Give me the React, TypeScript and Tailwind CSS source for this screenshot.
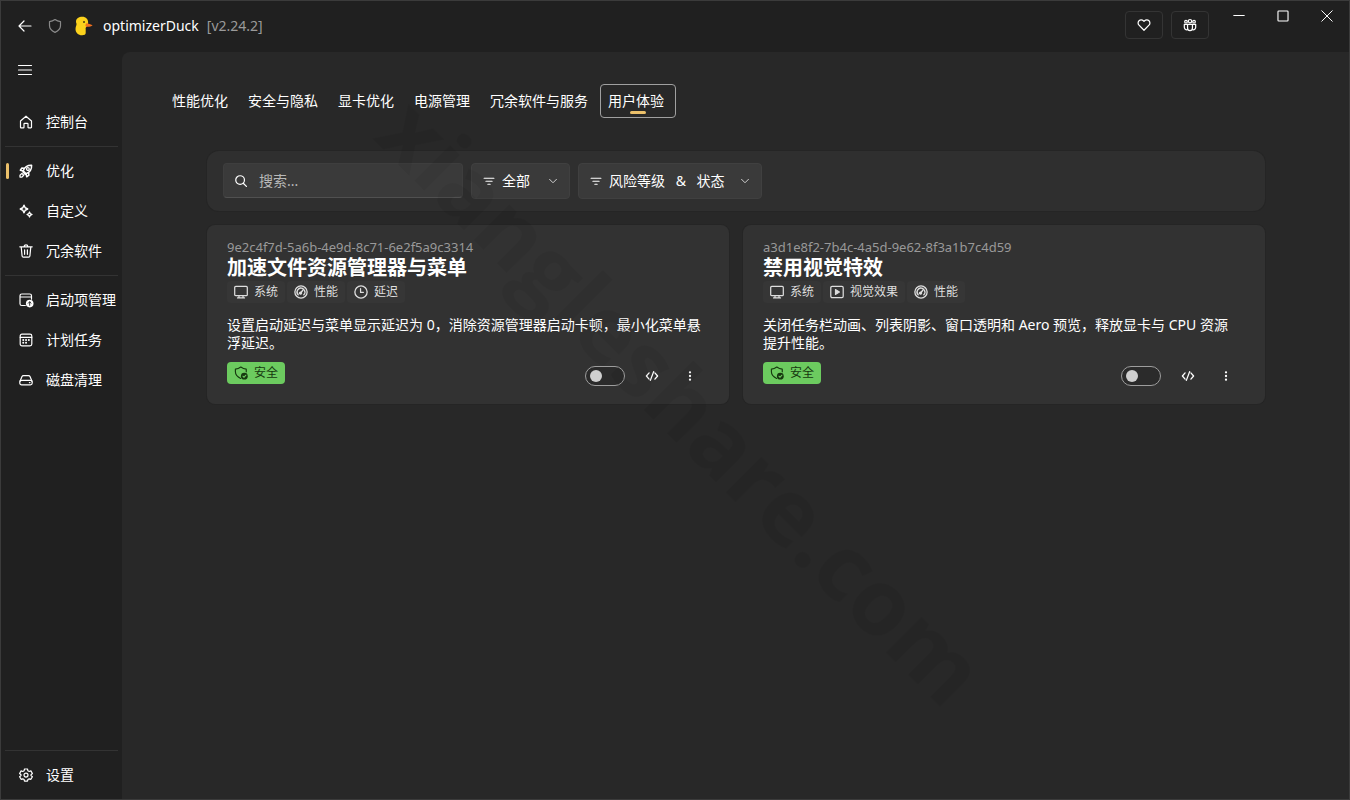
import type { ReactNode } from 'react'

type IconProps = { children: ReactNode; className?: string }

function Icon({ children, className = 'h-4 w-4' }: IconProps) {
  return (
    <svg
      viewBox="0 0 16 16"
      className={`shrink-0 ${className}`}
      fill="none"
      stroke="currentColor"
      strokeWidth="1.2"
      strokeLinecap="round"
      strokeLinejoin="round"
      aria-hidden="true"
    >
      {children}
    </svg>
  )
}

const HomeIcon = () => (
  <Icon>
    <path d="M2.500 7 8 2.200 13.500 7v6.200a.6.6 0 0 1-.6.6h-2.300a.6.6 0 0 1-.6-.6V10a.7.7 0 0 0-.7-.7H6.700a.7.7 0 0 0-.7.7v3.200a.6.6 0 0 1-.6.6H3.100a.6.6 0 0 1-.6-.6z" />
  </Icon>
)

const RocketIcon = () => (
  <Icon>
    <path d="M5.200 7.800C6.500 4.600 9 2.100 13.600 2.300c.3 4.600-2.300 7.200-5.500 8.500z" strokeWidth="1.500" />
    <circle cx="9.900" cy="6" r="1.400" />
    <path d="M5.800 5.200 3.900 5 2.300 7.200l2.900.8M10.700 10.300l.2 1.900-2.200 1.600-.6-2.900M4.800 8.800l2.300 2.300" strokeWidth="1.500" />
    <path d="M3.900 10.400 2 12.200v1.900h1.900l1.800-1.900z" strokeWidth="1.300" />
  </Icon>
)

const SparkleIcon = () => (
  <Icon>
    <path d="M6 2.300 7.200 4.800 9.700 6 7.200 7.200 6 9.700 4.800 7.200 2.300 6l2.500-1.200z" strokeWidth="1.500" />
    <path d="m11.500 9 .8 1.700 1.700.8-1.700.8-.8 1.700-.8-1.700-1.700-.8 1.700-.8z" strokeWidth="1.300" />
  </Icon>
)

const TrashIcon = () => (
  <Icon>
    <path d="M1.800 3.800h12.400M6.200 3.600C6.200 1.300 9.800 1.300 9.800 3.600M3.200 4l.9 9c.1.700.5 1.100 1.200 1.100h5.400c.7 0 1.100-.4 1.200-1.100l.9-9M6.600 6.800v4.500M9.400 6.800v4.500" />
  </Icon>
)

const StartupIcon = () => (
  <Icon>
    <path d="M7.300 13.500H3.800A1.800 1.800 0 0 1 2 11.700V3.800C2 2.800 2.800 2 3.800 2h7.900c1 0 1.800.8 1.800 1.800v3.400M2 5h11.500" />
    <circle cx="11.700" cy="11.600" r="3.800" fill="currentColor" stroke="none" />
    <path d="M11.700 13.400V9.900m-1.400 1.300 1.400-1.400 1.400 1.400" stroke="#202020" strokeWidth="0.9" />
  </Icon>
)

const CalendarIcon = () => (
  <Icon>
    <rect x="2.200" y="2.200" width="11.600" height="11.600" rx="1.800" />
    <path d="M2.200 5.300h11.600" />
    <path d="M5.200 8h.1M8 8h.1M10.800 8h.1M5.200 10.800h.1M8 10.800h.1" strokeWidth="1.900" />
  </Icon>
)

const DriveIcon = () => (
  <Icon>
    <path d="M2 9.300 4 4.600c.3-.7.800-1 1.500-1h5c.7 0 1.200.3 1.500 1l2 4.700" />
    <rect x="1.800" y="8.300" width="12.400" height="4.500" rx="1.800" />
    <path d="M11.400 10.600h.6" />
  </Icon>
)

const GearIcon = () => (
  <Icon>
    <path d="m6.500 2-.4 1.800-1.300.7-1.700-.6-1.500 2.600L3 7.700v.9L1.600 9.700l1.500 2.600 1.700-.5 1.300.7.4 1.700h3l.4-1.700 1.300-.7 1.700.5 1.500-2.600L13 8.600v-.9l1.400-1.200-1.500-2.600-1.700.6-1.300-.7L9.500 2z" />
    <circle cx="8" cy="8.100" r="2" />
  </Icon>
)

const FilterIcon = () => (
  <Icon className="h-3 w-3">
    <path d="M1.500 4.300h13M3.900 8.300h8.200M6.500 12.300h3" strokeWidth="1.600" />
  </Icon>
)

const ChevronIcon = () => (
  <Icon className="h-2.5 w-2.5">
    <path d="m2.500 5.300 5.500 5.500 5.500-5.500" strokeWidth="1.600" />
  </Icon>
)

const MonitorIcon = () => (
  <Icon className="h-3.5 w-3.5">
    <rect x="0.800" y="1.600" width="14.400" height="10.600" rx="1.200" strokeWidth="1.400" />
    <path d="M5.700 12.300v2.300M10.300 12.300v2.300M4 14.800h8" strokeWidth="1.400" />
  </Icon>
)

const GaugeIcon = () => (
  <Icon className="h-3.5 w-3.5">
    <circle cx="8" cy="8" r="7" strokeWidth="1.500" />
    <path d="M4.800 11.200a4.500 4.500 0 0 1 5-7.300M12 6a4.500 4.500 0 0 1-.8 5.200" strokeWidth="1.500" />
    <path d="m11.200 4.600-3.400 4.200" strokeWidth="1.600" />
    <circle cx="7.500" cy="9.200" r="1.300" fill="currentColor" />
  </Icon>
)

const ClockIcon = () => (
  <Icon className="h-3.5 w-3.5">
    <circle cx="8" cy="8" r="7" strokeWidth="1.500" />
    <path d="M7.500 4.200v4.300h3.200" strokeWidth="1.400" />
  </Icon>
)

const PlayIcon = () => (
  <Icon className="h-3.5 w-3.5">
    <rect x="0.900" y="1.600" width="14.200" height="12.800" rx="1.500" strokeWidth="1.400" />
    <path d="M6.200 5.200v5.600L10.800 8z" fill="currentColor" />
  </Icon>
)

const ShieldCheckIcon = () => (
  <Icon className="h-3.5 w-3.5">
    <path d="M7.600 14.200C3.300 12.300 1.600 9.900 1.600 6.700V3.500C4.100 3.400 6 2.500 7.800 1.100c1.800 1.400 3.700 2.300 6.200 2.400v3.200" strokeWidth="1.300" />
    <circle cx="11.800" cy="11.600" r="3.900" fill="currentColor" stroke="none" />
    <path d="m10.200 11.700 1.200 1.200 2.200-2.400" stroke="#6ccb5f" />
  </Icon>
)

const DuckLogo = () => (
  <svg viewBox="0 0 18 20" className="h-5 w-[18px] shrink-0" aria-hidden="true">
    <path
      d="M7.300.8c3.700 0 5.900 2.500 5.800 5.600 0 2.300-1.100 3.900-2.200 5-.5.600-.2 1.200-.2 2.100v3.600c0 1.500-1.400 2.200-3.600 2.200C3.200 19.300.5 16.700.5 13c0-2.300 1-3.300 1-4.800 0-1-.5-1.500-.5-2.500C1 2.600 3.800.8 7.300.8z"
      fill="#fcd21c"
    />
    <path d="M11.600 7.200c1.900 0 3.400 1.100 6 2.100-1.500 1.200-4.400 1.900-6.500 1.400-1-.9-.7-2.900.5-3.500z" fill="#f3701e" />
    <circle cx="9" cy="6" r="1" fill="#4a3b12" />
  </svg>
)

type NavItem = { label: string; icon: () => ReactNode; active?: boolean }

const navGroups: NavItem[][] = [
  [{ label: '控制台', icon: HomeIcon }],
  [
    { label: '优化', icon: RocketIcon, active: true },
    { label: '自定义', icon: SparkleIcon },
    { label: '冗余软件', icon: TrashIcon },
  ],
  [
    { label: '启动项管理', icon: StartupIcon },
    { label: '计划任务', icon: CalendarIcon },
    { label: '磁盘清理', icon: DriveIcon },
  ],
]

const tabs = ['性能优化', '安全与隐私', '显卡优化', '电源管理', '冗余软件与服务', '用户体验']
const activeTab = '用户体验'

const tagIcons: Record<string, () => ReactNode> = {
  系统: MonitorIcon,
  性能: GaugeIcon,
  延迟: ClockIcon,
  视觉效果: PlayIcon,
}

const tweaks = [
  {
    id: '9e2c4f7d-5a6b-4e9d-8c71-6e2f5a9c3314',
    title: '加速文件资源管理器与菜单',
    tags: ['系统', '性能', '延迟'],
    text: '设置启动延迟与菜单显示延迟为 0，消除资源管理器启动卡顿，最小化菜单悬浮延迟。',
  },
  {
    id: 'a3d1e8f2-7b4c-4a5d-9e62-8f3a1b7c4d59',
    title: '禁用视觉特效',
    tags: ['系统', '视觉效果', '性能'],
    text: '关闭任务栏动画、列表阴影、窗口透明和 Aero 预览，释放显卡与 CPU 资源提升性能。',
  },
]

function NavButton({ label, icon: ItemIcon, active }: NavItem) {
  return (
    <button className="relative flex h-10 w-full items-center gap-3 whitespace-nowrap pl-[13px] text-left">
      {active && <span className="absolute left-px top-3 h-4 w-[3px] rounded-full bg-[#ebc06a]" />}
      <ItemIcon />
      {label}
    </button>
  )
}

function FilterSelect({ label, className }: { label: string; className: string }) {
  return (
    <div className={`relative flex h-9 items-center rounded border border-[#404040] bg-[#3a3a3a] ${className}`}>
      <span className="pointer-events-none absolute left-[11px]">
        <FilterIcon />
      </span>
      <select aria-label={label} className="h-full w-full appearance-none bg-transparent pl-[30px] pr-8 outline-none">
        <option>{label}</option>
      </select>
      <span className="pointer-events-none absolute right-[11px] text-[#d0d0d0]">
        <ChevronIcon />
      </span>
    </div>
  )
}

function TweakCard({ id, title, tags, text }: (typeof tweaks)[number]) {
  return (
    <article className="rounded-lg bg-[#323232] px-5 pb-3.5 pt-3 ring-1 ring-[#252525]">
      <p className="text-[13px] leading-5 text-[#999999]">{id}</p>
      <h2 className="text-xl font-bold leading-[22px]">{title}</h2>
      <ul className="mt-0.5 flex gap-0.5 text-xs text-[#dedede]">
        {tags.map((tag) => {
          const TagIcon = tagIcons[tag]
          return (
            <li key={tag} className="flex h-[22px] items-center gap-1.5 rounded bg-[#363636] px-[7px]">
              <TagIcon />
              {tag}
            </li>
          )
        })}
      </ul>
      <p className="mt-[13px] break-all pr-1.5 leading-[18px]">{text}</p>
      <div className="mt-2.5 flex items-start justify-between">
        <span className="flex h-[22px] items-center gap-1.5 rounded bg-[#6ccb5f] px-[7px] text-xs text-[#16380f]">
          <ShieldCheckIcon />
          安全
        </span>
        <div className="flex items-center">
          <input
            type="checkbox"
            role="switch"
            aria-label={title}
            className="mr-2 h-5 w-10 appearance-none rounded-full border border-[#9d9d9d] bg-[#2b2b2b] px-1 py-[3px] before:block before:h-3 before:w-3 before:rounded-full before:bg-[#cfcfcf] before:content-['']"
          />
          <button aria-label="查看代码" className="flex h-7 w-[38px] items-center justify-center">
            <Icon className="h-3.5 w-3.5">
              <path d="M4.700 4.500 1.600 8l3.100 3.500M11.300 4.500 14.400 8l-3.100 3.500M9.900 3l-3.800 10" strokeWidth="1.500" />
            </Icon>
          </button>
          <button aria-label="更多" className="flex h-7 w-[38px] items-center justify-center">
            <Icon className="h-3.5 w-3.5">
              <path d="M8 3.800h.01M8 8h.01M8 12.200h.01" strokeWidth="2.600" />
            </Icon>
          </button>
        </div>
      </div>
    </article>
  )
}

export default function App() {
  return (
    <div className="relative flex min-h-screen flex-col overflow-hidden border border-[#3b3b3b] bg-[#202020] font-['Noto_Sans','Noto_Sans_CJK_SC',sans-serif] text-sm text-white">
      <header className="flex h-[51px] items-start justify-between">
        <div className="flex h-[50px] items-center">
          <button aria-label="返回" className="ml-4 flex w-4 justify-center">
            <Icon>
              <path d="M14 8H2M7 3 2 8l5 5" />
            </Icon>
          </button>
          <span className="ml-3.5 text-[#8a8a8a]">
            <Icon>
              <path d="M8 1.600c1.700 1.300 3.500 1.900 5.500 2v4c0 3-1.800 5.200-5.500 6.800-3.700-1.600-5.500-3.800-5.500-6.800v-4c2-.1 3.800-.7 5.500-2z" />
            </Icon>
          </span>
          <span className="ml-3">
            <DuckLogo />
          </span>
          <h1 className="ml-2.5">optimizerDuck</h1>
          <span className="ml-2 text-[#9a9a9a]">[v2.24.2]</span>
        </div>
        <div className="flex items-start">
          <div className="mr-2 mt-2.5 flex gap-2">
            <button aria-label="赞助" className="flex h-7 w-[38px] items-center justify-center rounded border border-[#343434]">
              <Icon className="h-3.5 w-3.5">
                <path d="M8 14 2.300 8.200a3.500 3.500 0 0 1 0-5 3.500 3.500 0 0 1 5 0l.7.7.7-.7a3.500 3.500 0 0 1 5 0 3.500 3.500 0 0 1 0 5z" strokeWidth="1.400" />
              </Icon>
            </button>
            <button aria-label="社区" className="flex h-7 w-[38px] items-center justify-center rounded border border-[#343434]">
              <Icon className="h-3.5 w-3.5">
                <circle cx="8" cy="3.600" r="1.900" strokeWidth="1.400" />
                <circle cx="3.400" cy="4.200" r="1.500" strokeWidth="1.400" />
                <circle cx="12.600" cy="4.200" r="1.500" strokeWidth="1.400" />
                <path d="M5.200 7.400h5.600v4c0 4-5.600 4-5.600 0zM4.700 7.400H1.500v3.300c0 1.900 1.500 3 3.500 2.700M11.300 7.400h3.200v3.300c0 1.900-1.500 3-3.500 2.700" strokeWidth="1.400" />
              </Icon>
            </button>
          </div>
          <button aria-label="最小化" className="flex h-[30px] w-11 items-center justify-center">
            <Icon className="h-3 w-3">
              <path d="M1 7.300h14" strokeWidth="1.400" />
            </Icon>
          </button>
          <button aria-label="最大化" className="flex h-[30px] w-11 items-center justify-center">
            <Icon className="h-3 w-3">
              <rect x="1.300" y="1.300" width="13.400" height="13.400" rx="1" strokeWidth="1.500" />
            </Icon>
          </button>
          <button aria-label="关闭" className="flex h-[30px] w-11 items-center justify-center">
            <Icon className="h-3 w-3">
              <path d="m1 1 14 14M15 1 1 15" strokeWidth="1.300" />
            </Icon>
          </button>
        </div>
      </header>

      <div className="flex grow">
        <nav className="flex w-[121px] shrink-0 flex-col px-1 pb-1">
          <button aria-label="菜单" className="mb-3.5 ml-3 flex h-9 w-4 items-center">
            <Icon>
              <path d="M1.500 3.500h13M1.500 8h13M1.500 12.500h13" />
            </Icon>
          </button>
          {navGroups.map((group, i) => (
            <div key={group[0].label}>
              {i > 0 && <hr className="my-1 border-[#333333]" />}
              {group.map((item) => (
                <NavButton key={item.label} {...item} />
              ))}
            </div>
          ))}
          <div className="mt-auto">
            <hr className="my-1 border-[#333333]" />
            <NavButton label="设置" icon={GearIcon} />
          </div>
        </nav>

        <main className="min-w-0 grow rounded-tl-lg bg-[#282828] pt-8">
          <div role="tablist" className="ml-[42px] flex">
            {tabs.map((tab) => (
              <button
                key={tab}
                role="tab"
                aria-selected={tab === activeTab}
                className={`relative h-[34px] rounded border pl-[7px] pr-[11px] ${
                  tab === activeTab ? 'border-[#a0a0a0]' : 'border-transparent'
                }`}
              >
                {tab}
                {tab === activeTab && (
                  <span className="absolute bottom-[3px] left-1/2 h-[3px] w-4 -translate-x-1/2 rounded-full bg-[#ebc06a]" />
                )}
              </button>
            ))}
          </div>

          <section className="mt-[33px] pl-[85px] pr-[84px]">
            <div className="flex h-[60px] gap-2 rounded-xl bg-[#2f2f2f] px-4 pt-3 ring-1 ring-[#252525]">
              <label className="flex h-[35px] w-60 items-center gap-3 rounded border border-[#3e3e3e] border-b-[#505050] bg-[#3a3a3a] pl-[11px]">
                <Icon className="h-3 w-3">
                  <circle cx="6.800" cy="6.800" r="5.800" strokeWidth="1.600" />
                  <path d="m11 11 4.200 4.200" strokeWidth="1.700" />
                </Icon>
                <input
                  type="text"
                  aria-label="搜索"
                  placeholder="搜索..."
                  className="min-w-0 grow bg-transparent outline-none placeholder:text-[#b8b8b8]"
                />
              </label>
              <FilterSelect label="全部" className="w-[99px]" />
              <FilterSelect label={'风险等级\u2002 &\u2002 状态'} className="w-[184px]" />
            </div>

            <div className="mt-3.5 grid grid-cols-2 gap-3.5">
              {tweaks.map((tweak) => (
                <TweakCard key={tweak.id} {...tweak} />
              ))}
            </div>
          </section>
        </main>
      </div>

      <div aria-hidden="true" className="pointer-events-none absolute inset-0 flex items-center justify-center pl-4">
        <span className="rotate-45 select-none font-['Open_Sans',sans-serif] text-[92px] font-bold leading-none text-black/5">
          xiangleshare.com
        </span>
      </div>
    </div>
  )
}
